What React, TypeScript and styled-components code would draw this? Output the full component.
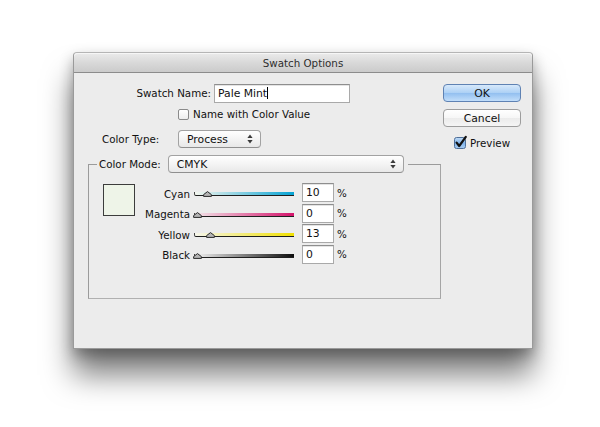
import React from 'react';
import styled, { createGlobalStyle } from 'styled-components';

const GlobalStyle = createGlobalStyle`
  html, body {
    margin: 0;
    padding: 0;
    background: #ffffff;
  }
  body {
    font-family: 'DejaVu Sans', sans-serif;
    font-size: 10.3px;
    color: #111;
  }
`;

type Channel = {
  name: string;
  value: number;
  from: string;
  to: string;
};

const channels: Channel[] = [
  { name: 'Cyan', value: 10, from: '#f4f6ee', to: '#06a3d4' },
  { name: 'Magenta', value: 0, from: '#f3e6ea', to: '#d4136b' },
  { name: 'Yellow', value: 13, from: '#f6f6ec', to: '#f0e000' },
  { name: 'Black', value: 0, from: '#f2f2f2', to: '#0c0c0c' },
];

const Arrows = () => (
  <StyledArrows width="6" height="10" viewBox="0 0 6 10">
    <path d="M3 0.5 L5.6 4 L0.4 4 Z" fill="#3a3a3a" />
    <path d="M3 9.5 L5.6 6 L0.4 6 Z" fill="#3a3a3a" />
  </StyledArrows>
);

const Popup = ({ label, width }: { label: string; width: number }) => (
  <StyledPopup width={width}>
    <span>{label}</span>
    <Arrows />
  </StyledPopup>
);

const Slider = ({ channel }: { channel: Channel }) => (
  <StyledSlider>
    <StyledTrack from={channel.from} to={channel.to} />
    <StyledThumb style={{ left: `${channel.value}%` }} width="9" height="6" viewBox="0 0 9 6">
      <path d="M4.5 0.6 L8.4 3.6 L8.4 5.4 L0.6 5.4 L0.6 3.6 Z" fill="#b5b5b5" stroke="#2a2a2a" strokeWidth="1" />
    </StyledThumb>
  </StyledSlider>
);

const App = (): JSX.Element => {
  return (
    <>
      <GlobalStyle />
      <StyledPage>
        <StyledWindow>
          <StyledTitleBar>Swatch Options</StyledTitleBar>
          <StyledBody>
            <StyledMain>
              <StyledNameRow>
                <StyledNameLabel>Swatch Name:</StyledNameLabel>
                <StyledTextInput width={136}>Pale Mint<StyledCaret /></StyledTextInput>
              </StyledNameRow>
              <StyledCheckRow>
                <StyledCheckbox />
                <span>Name with Color Value</span>
              </StyledCheckRow>
              <StyledTypeRow>
                <StyledTypeLabel>Color Type:</StyledTypeLabel>
                <Popup label="Process" width={83} />
              </StyledTypeRow>
              <StyledGroup>
                <StyledLegend>
                  <span>Color Mode:</span>
                  <Popup label="CMYK" width={236} />
                </StyledLegend>
                <StyledGroupContent>
                  <StyledSwatch />
                  <StyledChannelGrid>
                    {channels.map((channel) => (
                      <React.Fragment key={channel.name}>
                        <StyledChannelLabel>{channel.name}</StyledChannelLabel>
                        <Slider channel={channel} />
                        <StyledTextInput width={32}>{channel.value}</StyledTextInput>
                        <span>%</span>
                      </React.Fragment>
                    ))}
                  </StyledChannelGrid>
                </StyledGroupContent>
              </StyledGroup>
            </StyledMain>
            <StyledSide>
              <StyledButton primary>OK</StyledButton>
              <StyledButton>Cancel</StyledButton>
              <StyledPreviewRow>
                <StyledCheckedBox width="13" height="13" viewBox="0 0 13 13">
                  <defs>
                    <linearGradient id="chk" x1="0" y1="0" x2="0" y2="1">
                      <stop offset="0" stopColor="#c4ddf7" />
                      <stop offset="0.5" stopColor="#7fb3ea" />
                      <stop offset="1" stopColor="#a9cdf3" />
                    </linearGradient>
                  </defs>
                  <rect x="0.5" y="1.5" width="11" height="11" rx="2" fill="url(#chk)" stroke="#4f6f98" />
                  <path d="M2.6 6.6 L5.2 10 L11.8 0.8" fill="none" stroke="#111" strokeWidth="2.2" strokeLinecap="round" strokeLinejoin="round" />
                </StyledCheckedBox>
                <span>Preview</span>
              </StyledPreviewRow>
            </StyledSide>
          </StyledBody>
        </StyledWindow>
      </StyledPage>
    </>
  );
};

export default App;

const StyledPage = styled.div`
  width: 600px;
  height: 427px;
  padding: 52px 0 0 73px;
  box-sizing: border-box;
  overflow: hidden;
`;

const StyledWindow = styled.div`
  width: 460px;
  height: 297px;
  box-sizing: border-box;
  display: flex;
  flex-direction: column;
  background: #ececec;
  border: 1px solid #9a9a9a;
  border-top-color: #b5b5b5;
  border-radius: 4px 4px 0 0;
  box-shadow: 0 26px 30px rgba(0, 0, 0, 0.5), 0 6px 14px rgba(0, 0, 0, 0.3);
`;

const StyledTitleBar = styled.div`
  height: 19px;
  flex: none;
  display: flex;
  align-items: center;
  justify-content: center;
  color: #2e2e2e;
  background: linear-gradient(#ebebeb, #d9d9d9 50%, #cbcbcb);
  border-bottom: 1px solid #8c8c8c;
  border-radius: 4px 4px 0 0;
  box-shadow: inset 0 1px 0 #f6f6f6;
`;

const StyledBody = styled.div`
  display: flex;
  padding-top: 11px;
`;

const StyledMain = styled.div`
  width: 368px;
  display: flex;
  flex-direction: column;
`;

const StyledNameRow = styled.div`
  display: flex;
  align-items: center;
  height: 18px;
`;

const StyledNameLabel = styled.span`
  width: 137px;
  margin-right: 3px;
  text-align: right;
`;

const StyledTextInput = styled.div<{ width: number }>`
  width: ${(p) => p.width}px;
  height: 19px;
  box-sizing: border-box;
  display: flex;
  align-items: center;
  padding-left: 3px;
  background: #fff;
  border: 1px solid #a9a9a9;
  border-top-color: #8e8e8e;
  box-shadow: inset 0 1px 0 #e4e4e4;
  font-size: 10.8px;
`;

const StyledCaret = styled.span`
  display: inline-block;
  width: 1px;
  height: 12px;
  background: #000;
`;

const StyledCheckRow = styled.div`
  display: flex;
  align-items: center;
  gap: 4px;
  height: 12px;
  margin-top: 6px;
  padding-left: 104px;
`;

const StyledCheckbox = styled.span`
  width: 11px;
  height: 11px;
  box-sizing: border-box;
  border: 1px solid #8a8a8a;
  border-radius: 2px;
  background: linear-gradient(#ffffff, #eeeeee);
`;

const StyledTypeRow = styled.div`
  display: flex;
  align-items: center;
  margin-top: 10px;
  padding-left: 28px;
`;

const StyledTypeLabel = styled.span`
  width: 76px;
`;

const StyledPopup = styled.div<{ width: number }>`
  width: ${(p) => p.width}px;
  height: 18px;
  box-sizing: border-box;
  display: flex;
  align-items: center;
  justify-content: space-between;
  padding: 0 7px 0 8px;
  background: linear-gradient(#ffffff, #f4f4f4 50%, #e8e8e8);
  border: 1px solid #a2a2a2;
  border-bottom-color: #8f8f8f;
  border-radius: 4px;
  font-size: 10.8px;
`;

const StyledArrows = styled.svg`
  display: block;
`;

const StyledGroup = styled.fieldset`
  margin: 7px 0 0 14px;
  padding: 0;
  width: 353px;
  height: 144px;
  box-sizing: border-box;
  min-inline-size: 0;
  border: 1px solid #9b9b9b;
  border-right-color: #a5a5a5;
  border-bottom-color: #b0b0b0;
`;

const StyledLegend = styled.legend`
  display: flex;
  align-items: center;
  gap: 7px;
  margin-left: 8px;
  padding: 0 4px 0 2px;
`;

const StyledGroupContent = styled.div`
  display: flex;
  align-items: flex-start;
  padding: 10px 0 0 14px;
`;

const StyledSwatch = styled.div`
  width: 32px;
  height: 32px;
  margin-top: 1px;
  box-sizing: border-box;
  border: 1px solid #3c3c3c;
  background: #eef4e8;
`;

const StyledChannelGrid = styled.div`
  display: grid;
  grid-template-columns: 55px 100px 32px auto;
  grid-auto-rows: 19px;
  column-gap: 4px;
  row-gap: 1.6px;
  align-items: center;

  & > :nth-child(4n + 3) {
    margin-left: 4px;
  }
  & > :nth-child(4n) {
    margin-left: 3px;
  }
`;

const StyledChannelLabel = styled.span`
  text-align: right;
  padding-top: 2px;
`;

const StyledSlider = styled.div`
  position: relative;
  height: 19px;
`;

const StyledTrack = styled.div<{ from: string; to: string }>`
  position: absolute;
  left: 0;
  right: 0;
  top: 9px;
  height: 3px;
  background: linear-gradient(to right, ${(p) => p.from}, ${(p) => p.to});
  border-bottom: 1px solid #1e1e1e;
  border-left: 1px solid #444;
  border-radius: 0 0 0 2px;
`;

const StyledThumb = styled.svg`
  position: absolute;
  top: 8px;
  margin-left: -1px;
  display: block;
`;

const StyledSide = styled.div`
  width: 78px;
  display: flex;
  flex-direction: column;
  margin-left: 1px;
`;

const StyledButton = styled.div<{ primary?: boolean }>`
  height: 18px;
  box-sizing: border-box;
  display: flex;
  align-items: center;
  justify-content: center;
  margin-bottom: 7px;
  border-radius: 4px;
  font-size: 10.8px;
  border: 1px solid ${(p) => (p.primary ? '#5f82b3' : '#9d9d9d')};
  background: ${(p) =>
    p.primary
      ? 'linear-gradient(#d7e9fb, #acd0f5 50%, #92bff0 51%, #c2defa)'
      : 'linear-gradient(#ffffff, #f6f6f6 50%, #ebebeb 51%, #f5f5f5)'};
`;

const StyledPreviewRow = styled.div`
  display: flex;
  align-items: center;
  gap: 3px;
  margin-top: 2px;
  padding-left: 11px;
`;

const StyledCheckedBox = styled.svg`
  display: block;
  overflow: visible;
`;
